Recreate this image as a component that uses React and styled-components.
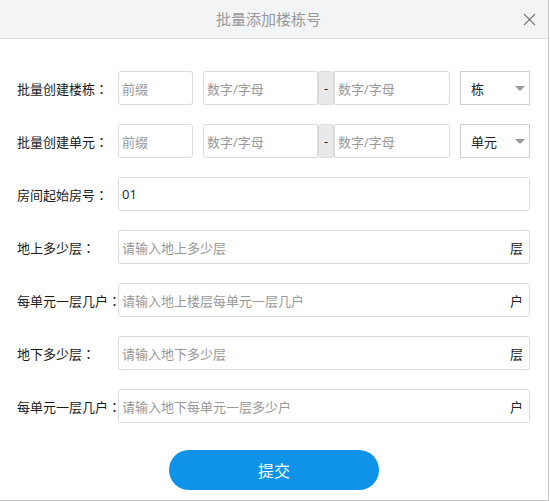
import React from "react";
import styled, { createGlobalStyle } from "styled-components";

const GlobalStyle = createGlobalStyle`
    html, body {
        margin: 0;
        padding: 0;
        background: #fff;
    }
    body {
        font-family: "Open Sans", "Noto Sans CJK SC", sans-serif;
        color: #333;
    }
`;

const Modal = styled.div`
    width: 548px;
    height: 500px;
    background: #fff;
    border-right: 1px solid #c6c6c6;
    border-bottom: 1px solid #c6c6c6;
    display: flex;
    flex-direction: column;
`;

const Header = styled.div`
    height: 39px;
    box-sizing: border-box;
    background: #f3f4f6;
    border-bottom: 1px solid #dcdcdc;
    display: flex;
    align-items: center;
    justify-content: center;
    padding-right: 11px;
    position: relative;
`;

const Title = styled.div`
    font-size: 15px;
    color: #999;
    line-height: 1;
`;

const Close = styled.button`
    position: absolute;
    right: 12px;
    top: 13px;
    width: 13px;
    height: 13px;
    padding: 0;
    border: none;
    background: none;
    display: flex;
`;

const Form = styled.div`
    display: flex;
    flex-direction: column;
    gap: 19px;
    padding: 32px 18px 0 17px;
`;

const Row = styled.div`
    display: flex;
    align-items: center;
    height: 34px;
`;

const Label = styled.div`
    width: 101px;
    flex-shrink: 0;
    font-family: "Noto Sans CJK SC", sans-serif;
    font-size: 13px;
    color: #1a1a1a;
    white-space: nowrap;
`;

const Colon = styled.span`
    font-family: "Noto Sans CJK TC", sans-serif;
`;

const Field = styled.div`
    flex: ${(p) => (p.$width ? `0 0 ${p.$width}px` : "1")};
    height: 34px;
    box-sizing: border-box;
    border: 1px solid #dcdcdc;
    border-radius: ${(p) => p.$radius || "3px"};
    display: flex;
    align-items: center;
    padding: 0 3px;
    margin-right: ${(p) => p.$gap || 0}px;
    font-size: 13px;
`;

const Placeholder = styled.span`
    color: #999;
    flex: 1;
`;

const Value = styled.span`
    color: #222;
    flex: 1;
`;

const Suffix = styled.span`
    color: #222;
    padding-right: 3px;
`;

const Addon = styled.div`
    width: 16px;
    height: 34px;
    box-sizing: border-box;
    background: #e9e9e9;
    border: 1px solid #dcdcdc;
    border-radius: 3px;
    display: flex;
    align-items: center;
    justify-content: center;
    font-size: 13px;
    color: #222;
`;

const Select = styled.div`
    flex: 0 0 70px;
    height: 34px;
    box-sizing: border-box;
    border: 1px solid #cfcfcf;
    display: flex;
    align-items: center;
    justify-content: space-between;
    padding: 0 3px 0 10px;
    font-size: 13px;
    color: #222;
`;

const Arrow = styled.span`
    width: 0;
    height: 0;
    border-left: 5px solid transparent;
    border-right: 5px solid transparent;
    border-top: 5px solid #9a9a9a;
    margin-right: 1px;
`;

const Footer = styled.div`
    display: flex;
    justify-content: center;
    padding-top: 27px;
`;

const Submit = styled.button`
    width: 210px;
    height: 40px;
    border: none;
    border-radius: 20px;
    background: #0e93e8;
    color: #fff;
    font-family: inherit;
    font-size: 16px;
`;

function FieldLabel({ children }) {
    return (
        <Label>
            {children}
            <Colon>：</Colon>
        </Label>
    );
}

function RangeRow({ label, unit }) {
    return (
        <Row>
            <FieldLabel>{label}</FieldLabel>
            <Field $width={75} $gap={10}>
                <Placeholder>前缀</Placeholder>
            </Field>
            <Field $width={115} $radius="3px 0 0 3px">
                <Placeholder>数字/字母</Placeholder>
            </Field>
            <Addon>-</Addon>
            <Field $width={116} $gap={10} $radius="0 3px 3px 0">
                <Placeholder>数字/字母</Placeholder>
            </Field>
            <Select>
                {unit}
                <Arrow />
            </Select>
        </Row>
    );
}

function InputRow({ label, placeholder, value, unit }) {
    return (
        <Row>
            <FieldLabel>{label}</FieldLabel>
            <Field>
                {value ? <Value>{value}</Value> : <Placeholder>{placeholder}</Placeholder>}
                {unit && <Suffix>{unit}</Suffix>}
            </Field>
        </Row>
    );
}

export default function App() {
    return (
        <>
            <GlobalStyle />
            <Modal>
                <Header>
                    <Title>批量添加楼栋号</Title>
                    <Close>
                        <svg width="13" height="13" viewBox="0 0 13 13">
                            <path d="M1 1L12 12M12 1L1 12" stroke="#777" strokeWidth="1.1" />
                        </svg>
                    </Close>
                </Header>
                <Form>
                    <RangeRow label="批量创建楼栋" unit="栋" />
                    <RangeRow label="批量创建单元" unit="单元" />
                    <InputRow label="房间起始房号" value="01" />
                    <InputRow label="地上多少层" placeholder="请输入地上多少层" unit="层" />
                    <InputRow label="每单元一层几户" placeholder="请输入地上楼层每单元一层几户" unit="户" />
                    <InputRow label="地下多少层" placeholder="请输入地下多少层" unit="层" />
                    <InputRow label="每单元一层几户" placeholder="请输入地下每单元一层多少户" unit="户" />
                </Form>
                <Footer>
                    <Submit>提交</Submit>
                </Footer>
            </Modal>
        </>
    );
}
